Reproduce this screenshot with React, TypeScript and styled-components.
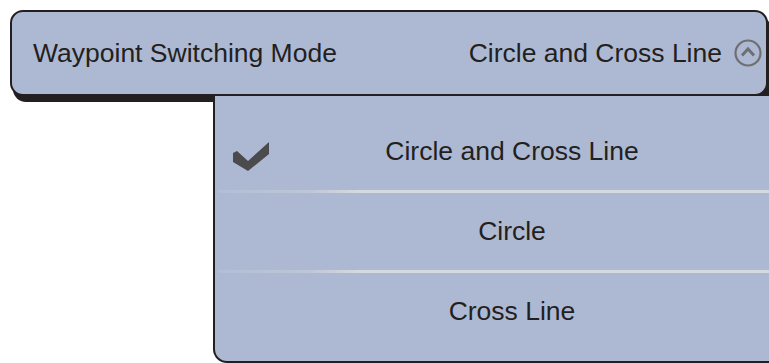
import styled, { createGlobalStyle } from 'styled-components';

const GlobalStyle = createGlobalStyle`
  html, body {
    margin: 0;
    padding: 0;
    background: #ffffff;
    overflow: hidden;
  }
  body {
    font-family: "Liberation Sans", Arial, Helvetica, sans-serif;
    color: #231f20;
  }
`;

const StyledPage = styled.div`
  width: 769px;
  height: 363px;
  padding: 10px 0 0 10px;
  box-sizing: border-box;
  overflow: hidden;
`;

const StyledHeader = styled.div`
  position: relative;
  box-sizing: border-box;
  width: 758px;
  height: 86px;
  display: flex;
  align-items: center;
  justify-content: space-between;
  padding: 0 4px 0 21px;
  background: #adb9d3;
  border: 2px solid #231f20;
  border-radius: 13px;
  box-shadow: 3px 6px 0 #231f20;
  font-size: 26.5px;
`;

const StyledValue = styled.div`
  display: flex;
  align-items: center;
  gap: 12px;
`;

const StyledMenu = styled.div`
  position: relative;
  z-index: 1;
  box-sizing: border-box;
  width: 570px;
  margin-left: 203px;
  padding: 17px 0 11px 0;
  background: #adb9d3;
  border: 2px solid #231f20;
  border-top: none;
  border-radius: 0 0 14px 14px;
`;

const StyledRow = styled.div`
  display: grid;
  grid-template-columns: 56px 1fr 28px;
  align-items: center;
  height: 77px;
  font-size: 26.5px;
`;

const StyledLabel = styled.span`
  grid-column: 2;
  text-align: center;
  white-space: nowrap;
`;

const StyledCheck = styled.svg`
  grid-column: 1;
  justify-self: start;
  margin: 9px 0 0 17px;
`;

const StyledDivider = styled.div`
  height: 3px;
  margin-left: 3px;
  background: linear-gradient(
    to right,
    rgba(214, 217, 222, 0.15) 0px,
    rgba(214, 217, 222, 0.4) 90px,
    #d6d9de 140px,
    #d6d9de 100%
  );
`;

function UpIcon() {
  return (
    <svg width="28" height="28" viewBox="0 0 28 28">
      <circle cx="14" cy="14" r="12.5" fill="none" stroke="#6f6f71" strokeWidth="2.2" />
      <polyline
        points="8,16.5 14,10 20,16.5"
        fill="none"
        stroke="#6f6f71"
        strokeWidth="3"
        strokeLinejoin="miter"
      />
    </svg>
  );
}

function Check() {
  return (
    <StyledCheck width="38" height="30" viewBox="0 0 38 30">
      <polygon points="1,12 5,10 16,20 37,1 37,13 16,30 1,21" fill="#4b4b4d" />
    </StyledCheck>
  );
}

const options = ['Circle and Cross Line', 'Circle', 'Cross Line'];

function App() {
  const selected = 'Circle and Cross Line';
  return (
    <StyledPage>
      <GlobalStyle />
      <StyledHeader>
        <span>Waypoint Switching Mode</span>
        <StyledValue>
          <span>{selected}</span>
          <UpIcon />
        </StyledValue>
      </StyledHeader>
      <StyledMenu>
        {options.map((opt, i) => (
          <div key={opt}>
            {i > 0 && <StyledDivider />}
            <StyledRow>
              {opt === selected && <Check />}
              <StyledLabel>{opt}</StyledLabel>
            </StyledRow>
          </div>
        ))}
      </StyledMenu>
    </StyledPage>
  );
}

export default App;
